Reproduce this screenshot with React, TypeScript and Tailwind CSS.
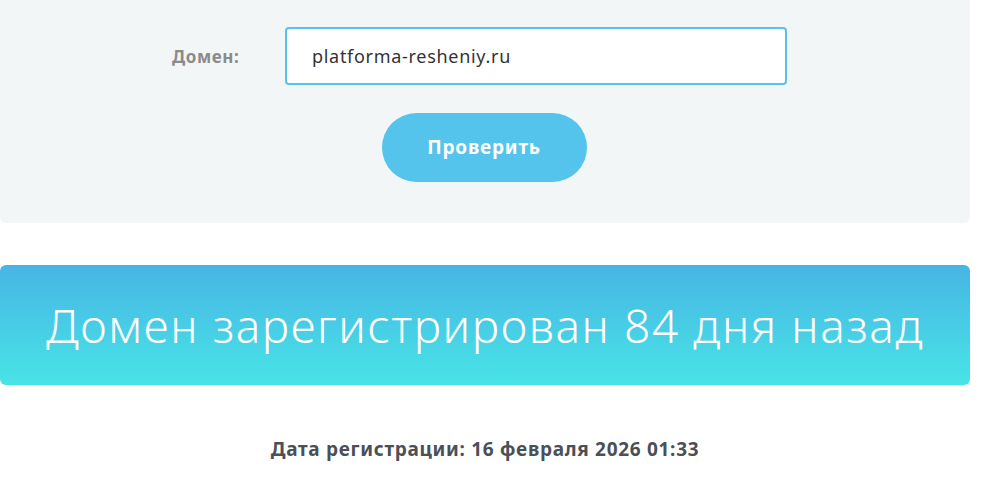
import React, { useState } from 'react'

export default function App() {
  const [domain, setDomain] = useState('platforma-resheniy.ru')

  return (
    <div className="w-[996px] h-[492px] bg-white overflow-hidden" style={{ fontFamily: '"Noto Sans", "Open Sans", sans-serif' }}>
      <div className="w-[970px]">
        <div className="bg-[#f3f6f7] rounded-b-md pt-[27px] pb-[41px]">
          <div className="flex items-center">
            <label className="ml-[172px] w-[113px] text-[17px] font-bold tracking-[0.6px] text-[#8b8b8b] pt-[1px]">Домен:</label>
            <input
              value={domain}
              onChange={(e) => setDomain(e.target.value)}
              className="w-[502px] h-[58px] bg-white border-2 border-[#56c3ea] rounded-[4px] pl-[25px] text-[18px] tracking-[0.7px] text-[#333] outline-none"
            />
          </div>
          <div className="flex justify-center mt-[28px]">
            <button className="w-[205px] h-[69px] ml-[-2px] rounded-full bg-[#54c4ec] text-white text-[19px] font-bold tracking-[0.8px]">
              Проверить
            </button>
          </div>
        </div>

        <div className="mt-[42px] h-[120px] rounded-md bg-gradient-to-b from-[#47b5e4] to-[#48e4e6] flex items-center justify-center">
          <h1 className="text-[46px] font-light text-white tracking-[1.6px]">Домен зарегистрирован 84 дня назад</h1>
        </div>

        <p className="mt-[50px] text-center text-[19px] font-bold tracking-[0.7px] text-[#4b4f57]">
          Дата регистрации: 16 февраля 2026 01:33
        </p>
      </div>
    </div>
  )
}
